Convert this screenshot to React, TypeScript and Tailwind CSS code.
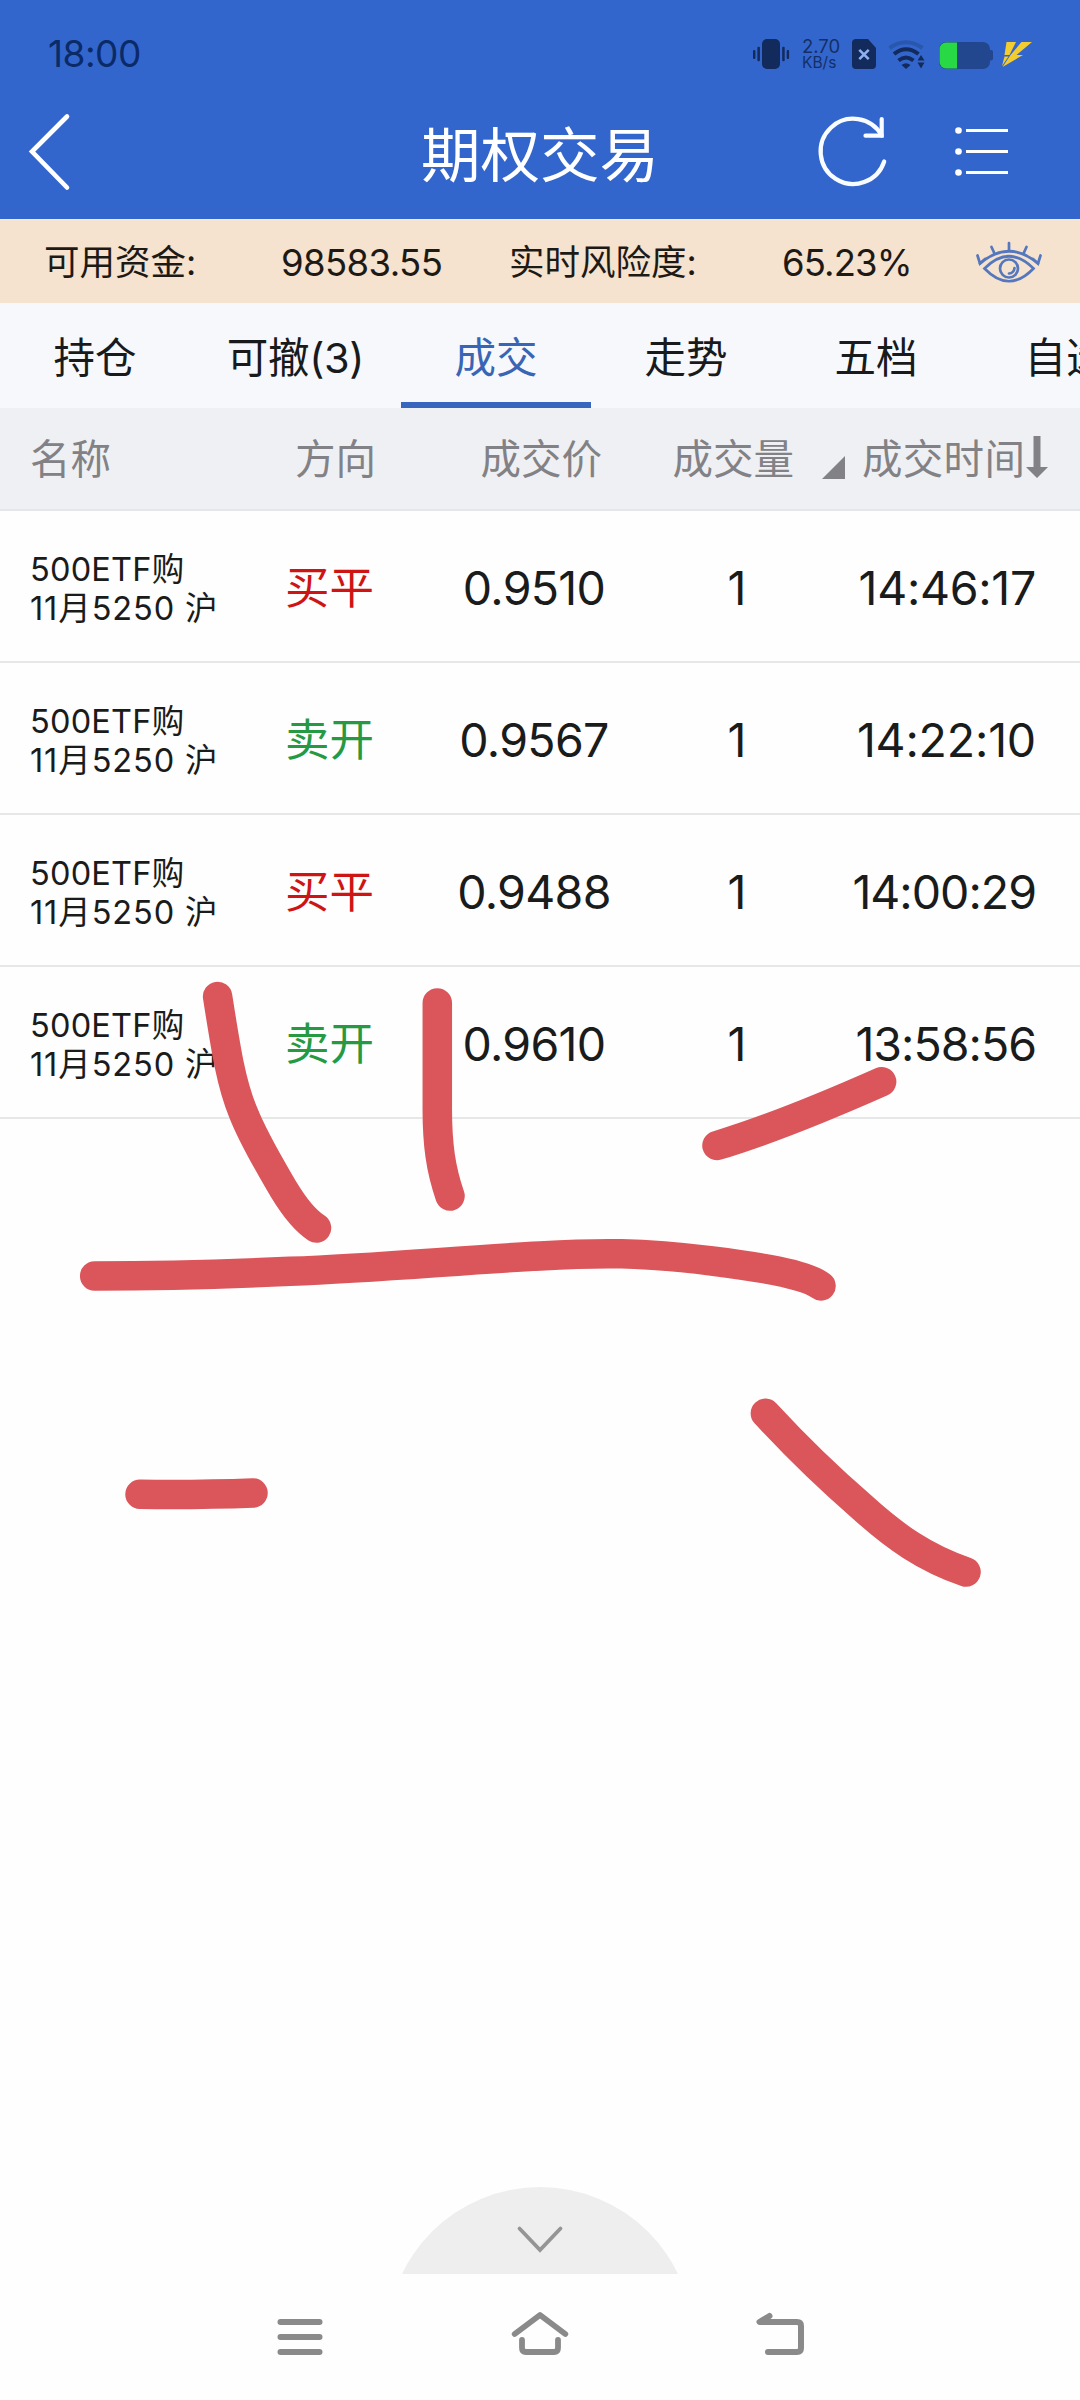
import type React from "react"

type Trade = { side: "buy" | "sell"; label: string; price: string; qty: string; time: string; spacing: string }

// proportional digits: rows with many 1s need a looser spacing
const trades: Trade[] = [
  { side: "buy", label: "买平", price: "0.9510", qty: "1", time: "14:46:17", spacing: "tracking-[-0.3px]" },
  { side: "sell", label: "卖开", price: "0.9567", qty: "1", time: "14:22:10", spacing: "tracking-[-0.2px]" },
  { side: "buy", label: "买平", price: "0.9488", qty: "1", time: "14:00:29", spacing: "tracking-[-1px]" },
  { side: "sell", label: "卖开", price: "0.9610", qty: "1", time: "13:58:56", spacing: "tracking-[-1px]" },
]

const tabs = ["持仓", "可撤(3)", "成交", "走势", "五档", "自选"]

const StatusBar: React.FC = () => (
  <div className="flex h-[84px] items-start justify-between pl-[48px] pr-[48px] text-[#0b2a68]">
    <span className="mt-[31px] text-[37px] leading-[46px] tracking-[-0.5px]">18:00</span>
    <div className="mt-[38px] flex h-[32px] items-start">
      <svg width="38" height="32" viewBox="752 38 38 32" fill="#122a5c">
        <rect x="762" y="39" width="18" height="30" rx="5" />
        <rect x="757.4" y="46.7" width="2.5" height="14.5" rx="1" />
        <rect x="753" y="50" width="2.4" height="9" rx="1" />
        <rect x="782.2" y="46.7" width="2.5" height="14.5" rx="1" />
        <rect x="786.7" y="50" width="2.4" height="9" rx="1" />
      </svg>
      <div className="ml-[12px] flex w-[38px] flex-col whitespace-nowrap text-[#142f66]">
        <span className="h-[16px] text-[18.5px] leading-[17px]">2.70</span>
        <span className="text-[15.5px] leading-[18px]">KB/s</span>
      </div>
      <svg className="ml-[10px]" width="28" height="32" viewBox="850 38 28 32">
        <path d="M856 39H868L876 48V65a4 4 0 0 1-4 4H856a4 4 0 0 1-4-4V43a4 4 0 0 1 4-4Z" fill="#122a5c" />
        <path d="M859.3 49.8l9.4 9.4M868.7 49.8l-9.4 9.4" stroke="#8fb0ee" strokeWidth="2.6" />
      </svg>
      <svg className="ml-[8px]" width="42" height="32" viewBox="886 38 42 32" fill="none">
        <path d="M889.5 48Q906 36.5 922.5 48" stroke="#2957ad" strokeWidth="4" />
        <path d="M894 54Q906 44.5 918.5 54" stroke="#122a5c" strokeWidth="4" />
        <path d="M898.5 60.5Q906 54.5 913.5 60.5" stroke="#122a5c" strokeWidth="4" />
        <path d="M901.500 65Q906 61.500 910.500 65L906 69Z" fill="#122a5c" />
        <path d="M917.500 60.500L921 55L924.500 60.500ZM917.500 62.500H924.500L921 68.500Z" fill="#122a5c" />
      </svg>
      <svg className="ml-[8px]" width="60" height="32" viewBox="936 38 60 32">
        <rect x="939" y="42" width="51" height="27" rx="7" fill="#23478f" />
        <path d="M990 50h1a2 2 0 0 1 2 2v6.5a2 2 0 0 1-2 2h-1Z" fill="#23478f" />
        <path d="M957 42.5V68.5H946a6.5 6.5 0 0 1-6.5-6.5V49a6.5 6.5 0 0 1 6.5-6.500Z" fill="#29d845" />
      </svg>
      <svg className="ml-[4px]" width="32" height="32" viewBox="1000 38 32 32" fill="#f3cc30">
        <path d="M1006.500 42H1016L1009.500 55H1004.500Z" />
        <path d="M1021.500 42H1032L1016.500 55H1023L1002.500 67L1010.500 55Z" />
        <path d="M1004.500 56.500H1008.500L1002 66Z" />
      </svg>
    </div>
  </div>
)

const TitleBar: React.FC = () => (
  <div className="grid h-[135px] grid-cols-3 items-start">
    <svg className="ml-[26px] mt-[28px]" width="48" height="80" viewBox="26 112 48 80" fill="none" stroke="#fff" strokeWidth="4.600" strokeLinecap="round">
      <path d="M67 116.5L32 151.5L67 187.5" />
    </svg>
    <h1 className="mt-[26px] text-center text-[59.5px] leading-[90px] text-white">期权交易</h1>
    <div className="mt-[28px] flex justify-end pr-[70px]">
      <svg width="76" height="80" viewBox="815 112 76 80" fill="none" stroke="#f8fbff" strokeWidth="4.200" strokeLinecap="round">
        <path d="M883.2 161.5A32.6 32.6 0 1 1 880.7 135.5" />
        <path d="M880.7 119V135.700H864.500" />
      </svg>
      <svg className="ml-[61px]" width="57" height="80" viewBox="953 112 57 80" fill="#fff">
        <circle cx="958.5" cy="130.5" r="3.3" />
        <circle cx="958.5" cy="151.5" r="3.3" />
        <circle cx="958.5" cy="172.5" r="3.3" />
        <path d="M966 129h42v3h-42zM966 150h42v3h-42zM966 171h42v3h-42z" />
      </svg>
    </div>
  </div>
)

const FundsBar: React.FC = () => (
  <div className="flex h-[84px] items-center whitespace-nowrap border-t border-[#eceaf0] bg-[#f5e2cf] text-[35.5px] text-[#1d1a16]">
    <span className="w-[237px] shrink-0 pl-[44px] pt-[3px]">可用资金:</span>
    <span className="w-[228px] shrink-0 pl-[44px] pt-[4px] text-[36.5px] tracking-[-0.6px]">98583.55</span>
    <span className="w-[230px] shrink-0 pl-[44px] pt-[3px]">实时风险度:</span>
    <span className="w-[230px] shrink-0 pl-[87px] pt-[4px] text-[36.5px] tracking-[-0.9px]">65.23%</span>
    <svg className="ml-[45px] shrink-0" width="76" height="48" viewBox="970 237 76 48" fill="none" stroke="#5577bd" strokeWidth="2.700" strokeLinecap="round">
      <path d="M980 262.500Q1009 238 1038 262.500" />
      <path d="M984.500 267.500Q1009 243 1033.500 267.500Q1009 293 984.500 267.500Z" />
      <circle cx="1009" cy="267.500" r="9" />
      <path d="M1014.500 267A6 6 0 0 1 1009 272.500" />
      <path d="M1009 242V249M991.500 246L994.500 252.500M1026.500 246L1023.500 252.500M977.500 254.500L980 262.500L985 258M1040.500 254.500L1038 262.500L1033 258" />
    </svg>
  </div>
)

const TabBar: React.FC = () => (
  <div className="flex h-[105px] overflow-hidden bg-[#f6f8fb] text-[41.5px]">
    {tabs.map((tab) => (
      <div
        key={tab}
        className={`flex shrink-0 items-center justify-center border-b-[6px] pt-[11px] ${
          tab === "可撤(3)" ? "w-[211px] tracking-[-0.3px]" : "w-[190px]"
        } ${tab === "成交" ? "border-[#3865bd] text-[#3865b5]" : "border-transparent text-[#181a1b]"}`}
      >
        {tab}
      </div>
    ))}
  </div>
)

const TableHead: React.FC = () => (
  <div className="flex h-[103px] items-center border-b-2 border-[#e5e6ea] bg-[#eff0f3] pt-[4px] text-[40.5px] text-[#828286]">
    <span className="w-[200px] pl-[30px]">名称</span>
    <span className="w-[176px] text-right">方向</span>
    <span className="w-[226px] text-right">成交价</span>
    <span className="w-[192px] text-right">成交量</span>
    <svg className="ml-[28px] mt-[14px]" width="24" height="24" fill="#828286">
      <path d="M0 23L23 0V23Z" />
    </svg>
    <span className="ml-[16px] tracking-[0.3px]">成交时间</span>
    <svg className="mt-[-7px]" width="24" height="42" fill="#828286">
      <path d="M8.5 0H15.5V31H23L12 42L1 31H8.5Z" />
    </svg>
  </div>
)

const TradeRow: React.FC<{ trade: Trade }> = ({ trade }) => (
  <div className="flex h-[152px] items-center border-b-2 border-[#e6e8e8] pt-[5px] text-[46.5px] text-[#1a1b1b]">
    <div className="w-[240px] whitespace-nowrap pl-[30px] text-[32.500px] leading-[39px]">
      <div className="tracking-[0.2px]">500ETF购</div>
      <div className="tracking-[0.9px]">11月5250 沪</div>
    </div>
    <span className={`w-[134px] text-right text-[44.5px] ${trade.side === "buy" ? "text-[#cf1414]" : "text-[#259a43]"}`}>
      {trade.label}
    </span>
    <span className="w-[320px] text-center tracking-[-0.7px]">{trade.price}</span>
    <span className="w-[86px] text-center">{trade.qty}</span>
    <span className={`w-[256px] text-right ${trade.spacing}`}>{trade.time}</span>
  </div>
)

// red pen strokes drawn over the page
const Scribble: React.FC = () => (
  <svg
    className="pointer-events-none absolute left-0 top-0"
    width="1080"
    height="2400"
    fill="none"
    stroke="#da565b"
    strokeWidth="29.5"
    strokeLinecap="round"
    strokeLinejoin="round"
  >
    <path d="M217.6 996.5C226 1050 231 1083 243 1112C254 1140 270 1166 284 1190Q301 1218 316.500 1228" />
    <path d="M437.3 1003V1105C437 1145 441 1170 450 1196" />
    <path d="M717 1145.5C765 1131 820 1109 881.6 1081.7" />
    <path d="M94.7 1276C160 1276 230 1274 290 1271.3C380 1268 460 1260 540 1256C600 1252.5 640 1252 712 1261C760 1267 805 1274 821 1286" />
    <path d="M140 1494.3Q200 1495 253 1493" />
    <path d="M765.4 1413.3C790 1440 825 1475 862 1507C895 1537 925 1558 966 1572" />
  </svg>
)

const NavBar: React.FC = () => (
  <div className="flex h-[126px] items-center justify-center gap-[170px]">
    <svg width="70" height="70" viewBox="265 2302 70 70" stroke="#8a8a8a" strokeWidth="6" strokeLinecap="round">
      <path d="M280.5 2322H319.5M280.5 2337H319.5M280.5 2352H319.5" />
    </svg>
    <svg width="70" height="70" viewBox="505 2302 70 70" fill="none" stroke="#8a8a8a" strokeWidth="5.8" strokeLinecap="round" strokeLinejoin="round">
      <path d="M514.7 2334L540 2315L565.3 2334" />
      <path d="M522 2340V2348Q522 2352 526 2352H554Q558 2352 558 2348V2340" />
    </svg>
    <svg width="70" height="70" viewBox="745 2302 70 70" fill="none" stroke="#8a8a8a" strokeWidth="6" strokeLinecap="round" strokeLinejoin="round">
      <path d="M769.5 2316L759.5 2322H797Q801 2322 801 2326V2348Q801 2352 797 2352H768" />
    </svg>
  </div>
)

const App: React.FC = () => (
  <div className="relative flex h-[2400px] w-[1080px] flex-col overflow-hidden bg-[#fefefe] font-['Inter','Noto_Sans_CJK_SC',sans-serif]">
    <header className="bg-[#3366cc]">
      <StatusBar />
      <TitleBar />
    </header>
    <FundsBar />
    <TabBar />
    <TableHead />
    {trades.map((trade) => (
      <TradeRow key={trade.time} trade={trade} />
    ))}
    <div className="flex flex-1 items-end justify-center">
      <svg width="280" height="88" viewBox="400 2186 280 88">
        <circle cx="540" cy="2340" r="153" fill="#eeeeee" />
        <path d="M519.5 2228.5L540 2250L560.5 2228.5" fill="none" stroke="#959595" strokeWidth="3.8" strokeLinecap="round" />
      </svg>
    </div>
    <NavBar />
    <Scribble />
  </div>
)

export default App
